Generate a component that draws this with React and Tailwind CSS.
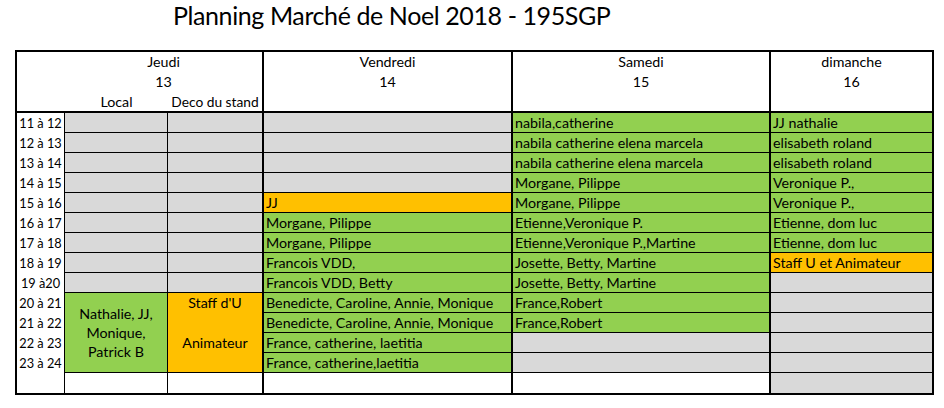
import React from "react";

const labels = [
  "11 à 12", "12 à 13", "13 à 14", "14 à 15", "15 à 16", "16 à 17", "17 à 18",
  "18 à 19", "19 à20", "20 à 21", "21 à 22", "22 à 23", "23 à 24", "",
];

const vendredi = [
  ["g", ""], ["g", ""], ["g", ""], ["g", ""],
  ["o", "JJ"],
  ["G", "Morgane, Pilippe"], ["G", "Morgane, Pilippe"],
  ["G", "Francois VDD,"], ["G", "Francois VDD, Betty"],
  ["G", "Benedicte, Caroline, Annie, Monique"], ["G", "Benedicte, Caroline, Annie, Monique"],
  ["G", "France, catherine, laetitia"], ["G", "France, catherine,laetitia"],
  ["w", ""],
];

const samedi = [
  ["G", "nabila,catherine"],
  ["G", "nabila catherine elena marcela"], ["G", "nabila catherine elena marcela"],
  ["G", "Morgane, Pilippe"], ["G", "Morgane, Pilippe"],
  ["G", "Etienne,Veronique P."], ["G", "Etienne,Veronique P.,Martine"],
  ["G", "Josette, Betty, Martine"], ["G", "Josette, Betty, Martine"],
  ["G", "France,Robert"], ["G", "France,Robert"],
  ["g", ""], ["g", ""], ["w", ""],
];

const dimanche = [
  ["G", "JJ nathalie"],
  ["G", "elisabeth roland"], ["G", "elisabeth roland"],
  ["G", "Veronique P.,"], ["G", "Veronique P.,"],
  ["G", "Etienne, dom luc"], ["G", "Etienne, dom luc"],
  ["o", "Staff U et Animateur"],
  ["g", ""], ["g", ""], ["g", ""], ["g", ""], ["g", ""], ["g", ""],
];

const BG = {
  g: "bg-[#d9d9d9]",
  G: "bg-[#92d050]",
  o: "bg-[#ffc000]",
  w: "bg-white",
};

function DayCell({ kind, text, last, thickRight }) {
  return (
    <div
      className={[
        "flex items-center overflow-hidden whitespace-nowrap pl-[2px] border-black",
        BG[kind],
        last ? "" : "border-b",
        thickRight ? "border-r-2" : "",
      ].join(" ")}
    >
      {text}
    </div>
  );
}

export default function App() {
  const cells = [];
  labels.forEach((lab, i) => {
    const last = i === labels.length - 1;
    cells.push(
      <div key={`l${i}`} className="flex items-center justify-center border-r border-black bg-white whitespace-nowrap text-[12.75px]">
        {lab}
      </div>
    );
    if (i < 9) {
      cells.push(<div key={`a${i}`} className="bg-[#d9d9d9] border-r border-b border-black" />);
      cells.push(<div key={`b${i}`} className="bg-[#d9d9d9] border-r-2 border-b border-black" />);
    } else if (i === 9) {
      cells.push(
        <div key="amerge" className="row-span-4 flex items-center justify-center text-center leading-[19px] bg-[#92d050] border-r border-b border-black">
          <span>Nathalie, JJ,<br />Monique,<br />Patrick B</span>
        </div>
      );
      cells.push(
        <div key="bmerge" className="row-span-4 flex flex-col items-center leading-[20px] bg-[#ffc000] border-r-2 border-b border-black">
          <span>Staff d'U</span>
          <span className="mt-[20px]">Animateur</span>
        </div>
      );
    } else if (last) {
      cells.push(<div key={`a${i}`} className="bg-white border-r border-black" />);
      cells.push(<div key={`b${i}`} className="bg-white border-r-2 border-black" />);
    }
    cells.push(<DayCell key={`v${i}`} kind={vendredi[i][0]} text={vendredi[i][1]} last={last} thickRight />);
    cells.push(<DayCell key={`s${i}`} kind={samedi[i][0]} text={samedi[i][1]} last={last} thickRight />);
    cells.push(<DayCell key={`d${i}`} kind={dimanche[i][0]} text={dimanche[i][1]} last={last} />);
  });

  return (
    <div className="min-h-[408px] w-[944px] bg-white text-black font-['Lato',sans-serif]">
      <div className="h-[50px] pl-[173px] text-[25px] leading-[30px] tracking-[-0.4px]">
        Planning Marché de Noel 2018 - 195SGP
      </div>
      <div className="ml-[15px] w-[919px] border-2 border-black text-[14.25px] leading-[19px]">
        <div className="grid grid-cols-[48px_103px_96px_249px_258px_161px] grid-rows-[61px_repeat(14,20px)]">
          {/* Header */}
          <div className="col-span-3 grid grid-cols-[48px_103px_94px] grid-rows-[20px_20px_19px] border-r-2 border-b-2 border-black leading-[20px]">
            <div className="col-start-2 col-span-2 text-center">Jeudi</div>
            <div className="col-start-2 col-span-2 text-center">13</div>
            <div className="col-start-2 text-center">Local</div>
            <div className="col-start-3 text-center whitespace-nowrap text-[13.75px]">Deco du stand</div>
          </div>
          <div className="flex flex-col items-center border-r-2 border-b-2 border-black leading-[20px]">
            <span>Vendredi</span>
            <span>14</span>
          </div>
          <div className="flex flex-col items-center border-r-2 border-b-2 border-black leading-[20px]">
            <span>Samedi</span>
            <span>15</span>
          </div>
          <div className="flex flex-col items-center border-b-2 border-black leading-[20px]">
            <span>dimanche</span>
            <span>16</span>
          </div>
          {cells}
        </div>
      </div>
    </div>
  );
}
